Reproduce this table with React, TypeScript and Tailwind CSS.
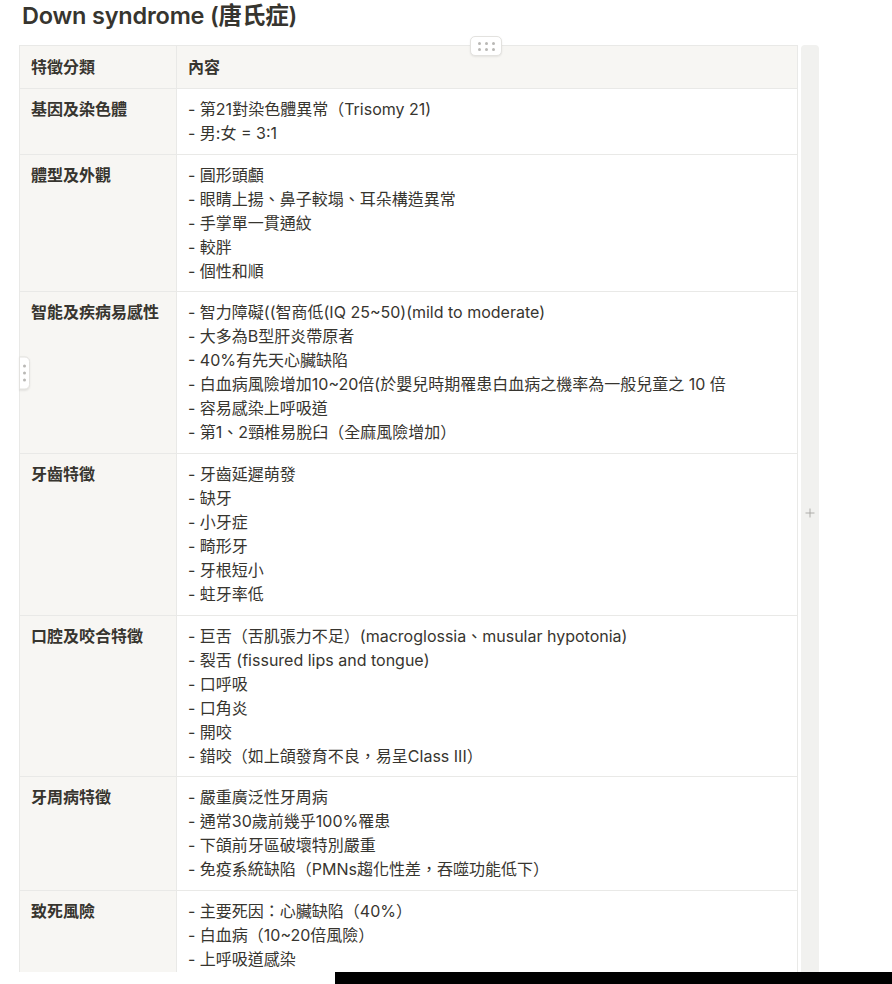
import { Plus } from 'lucide-react';

const ROWS: { label: string; lines: string[] }[] = [
  { label: '基因及染色體', lines: ['第21對染色體異常（Trisomy 21)', '男:女 = 3:1'] },
  {
    label: '體型及外觀',
    lines: ['圓形頭顱', '眼睛上揚、鼻子較塌、耳朵構造異常', '手掌單一貫通紋', '較胖', '個性和順'],
  },
  {
    label: '智能及疾病易感性',
    lines: [
      '智力障礙((智商低(IQ 25~50)(mild to moderate)',
      '大多為B型肝炎帶原者',
      '40%有先天心臟缺陷',
      '白血病風險增加10~20倍(於嬰兒時期罹患白血病之機率為一般兒童之 10 倍',
      '容易感染上呼吸道',
      '第1、2頸椎易脫臼（全麻風險增加）',
    ],
  },
  { label: '牙齒特徵', lines: ['牙齒延遲萌發', '缺牙', '小牙症', '畸形牙', '牙根短小', '蛀牙率低'] },
  {
    label: '口腔及咬合特徵',
    lines: [
      '巨舌（舌肌張力不足）(macroglossia、musular hypotonia)',
      '裂舌 (fissured lips and tongue)',
      '口呼吸',
      '口角炎',
      '開咬',
      '錯咬（如上頜發育不良，易呈Class III）',
    ],
  },
  {
    label: '牙周病特徵',
    lines: ['嚴重廣泛性牙周病', '通常30歲前幾乎100%罹患', '下頜前牙區破壞特別嚴重', '免疫系統缺陷（PMNs趨化性差，吞噬功能低下）'],
  },
  { label: '致死風險', lines: ['主要死因：心臟缺陷（40%）', '白血病（10~20倍風險）', '上呼吸道感染'] },
];

function Dots({ cols }: { cols: number }) {
  return (
    <div className={cols === 3 ? 'grid grid-cols-3 gap-x-[4px] gap-y-[3px]' : 'flex flex-col gap-[4px]'}>
      {Array.from({ length: cols === 3 ? 6 : 3 }).map((_, i) => (
        <span key={i} className="block h-[3px] w-[3px] rounded-full bg-[#b9b8b5]" />
      ))}
    </div>
  );
}

export default function App() {
  return (
    <div
      className="h-[984px] w-[892px] overflow-hidden bg-white text-[#37352f]"
      style={{ fontFamily: '"Inter", "Noto Sans CJK TC", sans-serif' }}
    >
      <div className="h-[972px] overflow-hidden">
        <h1 className="ml-[22px] text-[23.5px] font-semibold leading-[31px] tracking-[-0.2px]">
          Down syndrome (唐氏症)
        </h1>

        <div className="mt-[14px] ml-[19px] flex gap-[3px]">
          <div className="relative w-[779px]">
            <div className="absolute -top-[9px] left-[451px] z-10 flex h-[20px] w-[32px] items-center justify-center rounded-[5px] border border-[#e3e2df] bg-white shadow-[0_1px_2px_rgba(0,0,0,0.08)]">
              <Dots cols={3} />
            </div>
            <table className="w-[779px] table-fixed border-collapse text-[16px] leading-[24px]">
              <colgroup>
                <col className="w-[157px]" />
                <col />
              </colgroup>
              <thead>
                <tr className="bg-[#f7f6f3]">
                  <th className="border border-[#e9e9e7] px-[11px] py-[9px] text-left font-semibold">特徵分類</th>
                  <th className="border border-[#e9e9e7] px-[11px] py-[9px] text-left font-semibold">內容</th>
                </tr>
              </thead>
              <tbody>
                {ROWS.map((row, idx) => (
                  <tr key={row.label}>
                    <td className="relative border border-[#e9e9e7] bg-[#f7f6f3] px-[11px] pt-[8px] pb-[8.7px] align-top font-semibold">
                      {idx === 2 && (
                        <div className="absolute top-1/2 -left-[1px] flex h-[33px] w-[11px] -translate-y-1/2 items-center justify-center rounded-r-[5px] border border-[#e3e2df] bg-white shadow-[0_1px_2px_rgba(0,0,0,0.08)]">
                          <Dots cols={1} />
                        </div>
                      )}
                      {row.label}
                    </td>
                    <td className="border border-[#e9e9e7] px-[11px] pt-[8px] pb-[8.7px] align-top">
                      {row.lines.map((l) => (
                        <div key={l}>- {l}</div>
                      ))}
                    </td>
                  </tr>
                ))}
              </tbody>
            </table>
          </div>
          <div className="flex w-[18px] items-center justify-center self-stretch rounded-t-[4px] bg-[#f1f1ef]">
            <Plus className="h-[14px] w-[14px] text-[#a5a4a0]" strokeWidth={1.5} />
          </div>
        </div>
      </div>
      <div className="flex h-[12px]">
        <div className="w-[335px] bg-white" />
        <div className="flex-1 bg-black" />
      </div>
    </div>
  );
}
